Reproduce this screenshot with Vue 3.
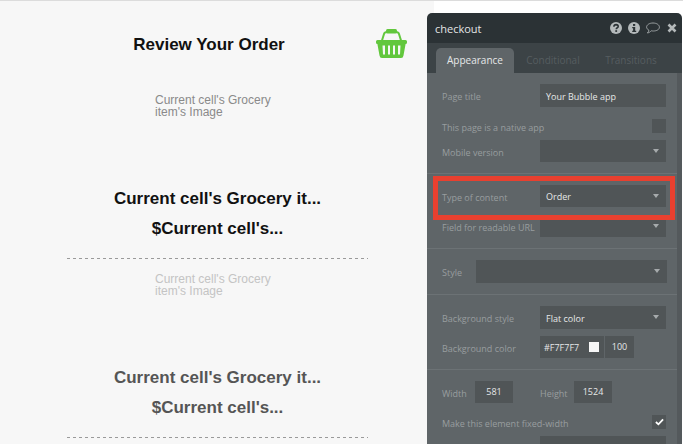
<script setup>
const items = [
  { id: 1, dim: false },
  { id: 2, dim: true },
];
</script>

<template>
  <div class="screen">
    <div class="page">
      <div class="page-head">
        <h1>Review Your Order</h1>
        <svg class="basket" viewBox="0 0 31 29" width="31" height="29">
          <path d="M5.5 13 L8 5 Q8.6 3 11 3 H20 Q22.4 3 23 5 L25.5 13" fill="none" stroke="#62c73d" stroke-width="2" />
          <rect x="10" y="0" width="11" height="4.5" rx="1.5" fill="#62c73d" />
          <path fill-rule="evenodd" fill="#62c73d" d="M1.5 11 H29.5 Q31 11 31 12.5 V13.5 Q31 15 29.6 15 L27.5 26.5 Q27.2 29 25 29 H6 Q3.8 29 3.5 26.5 L1.4 15 Q0 15 0 13.5 V12.5 Q0 11 1.5 11 Z M6.5 16.5 L7 25.5 H9 V16.5 Z M12 16.5 V25.5 H14 V16.5 Z M17 16.5 V25.5 H19 V16.5 Z M22 16.5 V25.5 H24 L24.5 16.5 Z" />
        </svg>
      </div>
      <div v-for="item in items" :key="item.id" class="cell" :class="{ dim: item.dim }">
        <div class="img-slot">Current cell's Grocery item's Image</div>
        <div class="name">Current cell's Grocery it...</div>
        <div class="price">$Current cell's...</div>
        <div class="dash"></div>
      </div>
    </div>

    <aside class="panel">
      <header class="panel-head">
        <span class="panel-title">checkout</span>
        <span class="head-icons">
          <svg viewBox="0 0 12 12" width="12" height="12">
            <circle cx="6" cy="6" r="6" fill="#b4b9ba" />
            <path d="M3.9 4.7 Q4 2.6 6.1 2.6 Q8.2 2.7 8.2 4.4 Q8.2 5.4 7 6 Q6.3 6.4 6.3 7.2" fill="none" stroke="#2b3235" stroke-width="1.6" />
            <rect x="5.3" y="8.2" width="1.8" height="1.7" fill="#2b3235" />
          </svg>
          <svg viewBox="0 0 12 12" width="12" height="12">
            <circle cx="6" cy="6" r="6" fill="#b4b9ba" />
            <rect x="5" y="2" width="2.2" height="1.9" fill="#2b3235" />
            <path d="M4.2 5 H7.2 V8.8 H8.2 V10 H4.2 V8.8 H5.1 V6.2 H4.2 Z" fill="#2b3235" />
          </svg>
          <svg class="bubble" viewBox="0 0 14 12" width="14" height="12">
            <path d="M7 1 C10.6 1 13.4 2.8 13.4 5.2 C13.4 7.6 10.6 9 7.4 9 C6.6 9 5.8 8.9 5.2 8.8 C4.2 10 2.8 10.8 1.4 11 C2.2 10.2 2.8 9.2 2.9 8.1 C1.4 7.4 0.6 6.4 0.6 5.2 C0.6 2.8 3.4 1 7 1 Z" fill="none" stroke="#b4b9ba" stroke-width="0.8" />
          </svg>
          <svg viewBox="0 0 10 10" width="10" height="10">
            <path d="M1.5 1.5 L8.5 8.5 M8.5 1.5 L1.5 8.5" stroke="#b4b9ba" stroke-width="2.6" />
          </svg>
        </span>
      </header>
      <nav class="tabs">
        <span class="tab active">Appearance</span>
        <span class="tab">Conditional</span>
        <span class="tab">Transitions</span>
      </nav>
      <div class="body">
        <section class="group first">
          <div class="row">
            <label>Page title</label>
            <div class="field text tall">Your Bubble app</div>
          </div>
          <div class="row check-row">
            <label>This page is a native app</label>
            <span class="check"></span>
          </div>
          <div class="row">
            <label>Mobile version</label>
            <div class="field select"></div>
          </div>
        </section>
        <section class="group">
          <div class="row">
            <label>Type of content</label>
            <div class="field select">Order</div>
          </div>
          <div class="row">
            <label>Field for readable URL</label>
            <div class="field select"></div>
          </div>
          <div class="highlight"></div>
        </section>
        <section class="group">
          <div class="row">
            <label>Style</label>
            <div class="field select wide tall"></div>
          </div>
        </section>
        <section class="group">
          <div class="row">
            <label>Background style</label>
            <div class="field select tall">Flat color</div>
          </div>
          <div class="row color-row">
            <label>Background color</label>
            <div class="field color">#F7F7F7<span class="swatch"></span></div>
            <div class="field opacity">100</div>
          </div>
        </section>
        <section class="group">
          <div class="row size-row">
            <label class="w-label">Width</label>
            <div class="field num">581</div>
            <label class="h-label">Height</label>
            <div class="field num">1524</div>
          </div>
          <div class="row check-row">
            <label>Make this element fixed-width</label>
            <span class="check">
              <svg viewBox="0 0 10 8" width="9" height="8">
                <path d="M1 4 L3.8 6.6 L9 1.2" fill="none" stroke="#fff" stroke-width="2" />
              </svg>
            </span>
          </div>
          <div class="row">
            <label></label>
            <div class="field select"></div>
          </div>
        </section>
        <div class="scrollbar"></div>
      </div>
    </aside>
  </div>
</template>

<style scoped>
.screen {
  width: 683px;
  height: 444px;
  position: relative;
  overflow: hidden;
  background: #fff;
  border-top: 1px solid #dcdcdc;
  box-sizing: border-box;
  font-family: "Liberation Sans", Arial, sans-serif;
}

.page {
  width: 434px;
  height: 443px;
  background: #f7f7f7;
  padding-top: 34px;
  box-sizing: border-box;
}

.page-head {
  position: relative;
  height: 20px;
  text-align: center;
  padding-right: 16px;
}

h1 {
  margin: 0;
  font-size: 17px;
  line-height: 20px;
  font-weight: bold;
  color: #111;
}

.basket {
  position: absolute;
  left: 376px;
  top: -6px;
}

.cell {
  width: 301px;
  margin-left: 67px;
  text-align: center;
}

.img-slot {
  width: 120px;
  margin: 39px 0 0 88px;
  height: 79px;
  text-align: left;
  font-size: 12px;
  line-height: 12px;
  color: #8a8a8a;
}

.name,
.price {
  font-size: 17px;
  line-height: 20px;
  font-weight: bold;
  color: #111;
}

.name {
  margin-top: 16px;
}

.price {
  margin-top: 10px;
}

.dash {
  margin-top: 19px;
  height: 1px;
  background: repeating-linear-gradient(to right, #9a9a9a 0 3px, transparent 3px 6px);
}

.dim .img-slot {
  margin-top: 14px;
  color: #c4c4c4;
}

.dim .name,
.dim .price {
  color: #555;
}

.panel {
  position: absolute;
  left: 427px;
  top: 12px;
  width: 255px;
  height: 440px;
  border-radius: 5px 5px 0 0;
  overflow: hidden;
  font-family: "Open Sans", "Noto Sans", sans-serif;
}

.panel-head {
  height: 30px;
  background: #2b3235;
  display: flex;
  align-items: center;
  justify-content: space-between;
  padding: 0 5px 0 8px;
}

.panel-title {
  font-size: 11px;
  color: #e4e6e6;
}

.head-icons {
  display: flex;
  align-items: center;
  gap: 6px;
}

.bubble {
  margin-right: 1px;
}

.tabs {
  height: 30px;
  background: #3c4346;
  display: flex;
  align-items: flex-end;
  padding-left: 9px;
}

.tab {
  width: 78px;
  height: 25px;
  line-height: 24px;
  text-align: center;
  font-size: 10px;
  color: #565d60;
}

.tab.active {
  background: #5f6568;
  color: #e6e8e8;
  border-radius: 5px 5px 0 0;
}

.body {
  position: relative;
  background: #5f6568;
  height: 380px;
  padding-right: 5px;
}

.group {
  position: relative;
  border-top: 1px solid #6c7275;
  padding: 11px 11px 11px 15px;
}

.group.first {
  border-top: 0;
}

.row {
  display: flex;
  align-items: center;
  justify-content: space-between;
}

.row + .row {
  margin-top: 8px;
}

.group .check-row {
  height: 14px;
  margin-top: 12px;
}

.group .check-row + .row {
  margin-top: 7px;
}

.group .color-row {
  margin-top: 7px;
}

label {
  font-size: 9px;
  color: #989d9f;
  white-space: nowrap;
  padding-top: 2px;
}

.field {
  background: #505557;
  height: 22px;
  line-height: 22px;
  padding-top: 1px;
  font-size: 9px;
  color: #e6e8e8;
  box-sizing: border-box;
  padding-left: 6px;
}

.field.tall {
  height: 23px;
  line-height: 23px;
}

.text,
.select {
  width: 126px;
}

.select {
  position: relative;
}

.select::after {
  content: "";
  position: absolute;
  right: 7px;
  top: 9px;
  border-left: 3.5px solid transparent;
  border-right: 3.5px solid transparent;
  border-top: 4px solid #a6aaac;
}

.select.wide {
  width: 191px;
  margin-right: -1px;
}

.check {
  width: 14px;
  height: 14px;
  background: #505557;
  display: flex;
  align-items: center;
  justify-content: center;
}

.highlight {
  position: absolute;
  left: 6px;
  top: 2px;
  width: 232px;
  height: 34px;
  border: 5px solid #e8402f;
}

.color-row {
  justify-content: flex-start;
}

.color-row label {
  width: 98px;
}

.color {
  width: 64px;
  position: relative;
  padding-left: 4px;
  margin-right: 1px;
}

.swatch {
  position: absolute;
  left: 49px;
  top: 6px;
  width: 10px;
  height: 10px;
  background: #f7f7f7;
}

.opacity {
  width: 29px;
  padding: 0;
  text-align: center;
}

.size-row {
  justify-content: flex-start;
}

.num {
  width: 38px;
  padding: 0;
  text-align: center;
}

.w-label {
  width: 33px;
}

.h-label {
  width: 34px;
  margin-left: 27px;
}

.scrollbar {
  position: absolute;
  right: 0;
  top: 0;
  bottom: 0;
  width: 5px;
  background: #54595c;
}
</style>

<style>
html,
body {
  margin: 0;
  background: #fff;
}
</style>
